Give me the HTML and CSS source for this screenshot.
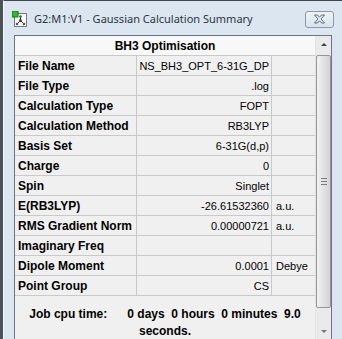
FILE: index.html
```html
<!DOCTYPE html>
<html>
<head>
<meta charset="utf-8">
<link rel="stylesheet" href="styles.css">
</head>
<body>
<div class="screen">
  <div class="edge"></div>
  <div class="window">
    <div class="titlebar">
      <svg class="appicon" width="16" height="16" viewBox="0 0 16 16">
        <rect x="2.5" y="2.5" width="12" height="13" fill="#fff" stroke="#777"/>
        <rect x="0" y="0" width="6" height="6" fill="#2ebd2e" stroke="#117711"/>
        <line x1="8.5" y1="6" x2="8.5" y2="9.5" stroke="#333" stroke-width="1"/>
        <line x1="8.5" y1="9.5" x2="5" y2="13" stroke="#333" stroke-width="1"/>
        <line x1="8.5" y1="9.5" x2="12" y2="13" stroke="#333" stroke-width="1"/>
        <circle cx="8.5" cy="5.5" r="1.3" fill="#555"/>
        <circle cx="8.5" cy="9.5" r="1.5" fill="#444"/>
        <circle cx="5" cy="13" r="1.3" fill="#555"/>
        <circle cx="12" cy="13" r="1.3" fill="#555"/>
      </svg>
      <span class="title">G2:M1:V1 - Gaussian Calculation Summary</span>
      <div class="close">
        <svg width="13" height="10" viewBox="0 0 13 10">
          <path d="M1.5 1 L4.5 1 L6.5 3.2 L8.5 1 L11.5 1 L8 5 L11.5 9 L8.5 9 L6.5 6.8 L4.5 9 L1.5 9 L5 5 Z" fill="#e8edf2" stroke="#5d6b78" stroke-width="1" stroke-linejoin="round"/>
        </svg>
      </div>
    </div>
    <div class="client">
      <div class="panel">
        <div class="content">
          <div class="grid">
            <div class="head">BH3 Optimisation</div>
            <div class="lab">File Name</div><div class="val">NS_BH3_OPT_6-31G_DP</div><div class="unit"></div>
            <div class="lab">File Type</div><div class="val">.log</div><div class="unit"></div>
            <div class="lab">Calculation Type</div><div class="val">FOPT</div><div class="unit"></div>
            <div class="lab">Calculation Method</div><div class="val">RB3LYP</div><div class="unit"></div>
            <div class="lab">Basis Set</div><div class="val">6-31G(d,p)</div><div class="unit"></div>
            <div class="lab">Charge</div><div class="val">0</div><div class="unit"></div>
            <div class="lab">Spin</div><div class="val">Singlet</div><div class="unit"></div>
            <div class="lab">E(RB3LYP)</div><div class="val">-26.61532360</div><div class="unit">a.u.</div>
            <div class="lab">RMS Gradient Norm</div><div class="val">0.00000721</div><div class="unit">a.u.</div>
            <div class="lab">Imaginary Freq</div><div class="val"></div><div class="unit"></div>
            <div class="lab">Dipole Moment</div><div class="val">0.0001</div><div class="unit">Debye</div>
            <div class="lab">Point Group</div><div class="val">CS</div><div class="unit"></div>
          </div>
          <p class="cpu">Job cpu time:      0 days  0 hours  0 minutes  9.0 seconds.</p>
        </div>
        <div class="scroll">
          <div class="arrow up"></div>
          <div class="track"><div class="thumb"><span class="grip"></span></div></div>
          <div class="arrow down"></div>
        </div>
      </div>
    </div>
  </div>
</div>
</body>
</html>
```
FILE: styles.css
```css
* { box-sizing: border-box; }
html, body { margin: 0; padding: 0; }
body { width: 342px; height: 339px; overflow: hidden; background: #dbe5ef; }
.screen { display: flex; width: 342px; height: 339px; }
.edge { width: 3px; background: #4b5258; flex: none; }
.window {
  flex: 1;
  display: flex;
  flex-direction: column;
  background: #dbe6f1;
  border-top: 1px solid #3e464e;
  border-left: 1px solid #f4f8fb;
}
.titlebar {
  height: 34px;
  display: flex;
  align-items: center;
  padding: 0 0 0 8px;
  flex: none;
}
.appicon { flex: none; margin-top: 2px; }
.title {
  margin-left: 6px;
  font-family: "Noto Sans", "Open Sans", sans-serif;
  font-size: 11px;
  color: #2b3540;
  margin-top: 1px;
}
.close {
  margin-left: auto;
  margin-right: 8px;
  margin-top: 2px;
  width: 29px;
  height: 17px;
  border: 1px solid #8c9aa8;
  border-radius: 3px;
  background: linear-gradient(#eef3f8, #d9e3ec);
  display: flex;
  align-items: center;
  justify-content: center;
}
.client {
  flex: 1;
  padding: 0 10px 0 10px;
  display: flex;
}
.panel {
  flex: 1;
  display: flex;
  border: 1px solid #6d747b;
  border-bottom: none;
  background: #f0f0f0;
}
.content { width: 300px; flex: none; display: flex; flex-direction: column; }
.grid {
  display: grid;
  grid-template-columns: 122px 135px 43px;
  grid-auto-rows: 20px;
  font-family: "Liberation Sans", Arial, sans-serif;
}
.grid > div {
  border-bottom: 1px solid #c9c9c9;
  display: flex;
  align-items: center;
  background: #f0f0f0;
  color: #000;
}
.head {
  grid-column: 1 / 4;
  justify-content: center;
  font-weight: bold;
  font-size: 12px;
  background: #f8f8f8 !important;
}
.lab {
  font-weight: bold;
  font-size: 12px;
  padding-left: 3px;
  border-right: 1px solid #c9c9c9;
  white-space: nowrap;
}
.val {
  font-size: 11px;
  justify-content: flex-end;
  padding-right: 2px;
  border-right: 1px solid #c9c9c9;
}
.unit {
  font-size: 11px;
  padding-left: 4px;
}
.cpu {
  margin: 0;
  padding: 10px 4px 0 4px;
  font-family: "Liberation Sans", Arial, sans-serif;
  font-weight: bold;
  font-size: 12px;
  line-height: 17px;
  text-align: center;
  white-space: pre-wrap;
  color: #000;
}
.scroll {
  width: 16px;
  flex: none;
  display: flex;
  flex-direction: column;
  background: #eaeaea;
  border-left: 1px solid #e4e4e4;
}
.arrow { height: 17px; flex: none; position: relative; }
.arrow::after {
  content: "";
  position: absolute;
  left: 5px;
  width: 0; height: 0;
  border-left: 3px solid transparent;
  border-right: 3px solid transparent;
}
.arrow.up::after { top: 7px; border-bottom: 3px solid #404040; }
.arrow.down::after { top: 7px; border-top: 3px solid #7a7a7a; }
.track { flex: 1; padding: 2px 0 15px 0; display: flex; }
.thumb {
  flex: 1;
  border: 1px solid #979797;
  border-radius: 2px;
  background: linear-gradient(90deg, #f2f2f2, #e0e0e0 60%, #d3d3d3);
  display: flex;
  align-items: center;
  justify-content: center;
}
.grip {
  width: 6px;
  height: 7px;
  background: repeating-linear-gradient(#7c7c7c 0 1px, transparent 1px 3px);
}
```
